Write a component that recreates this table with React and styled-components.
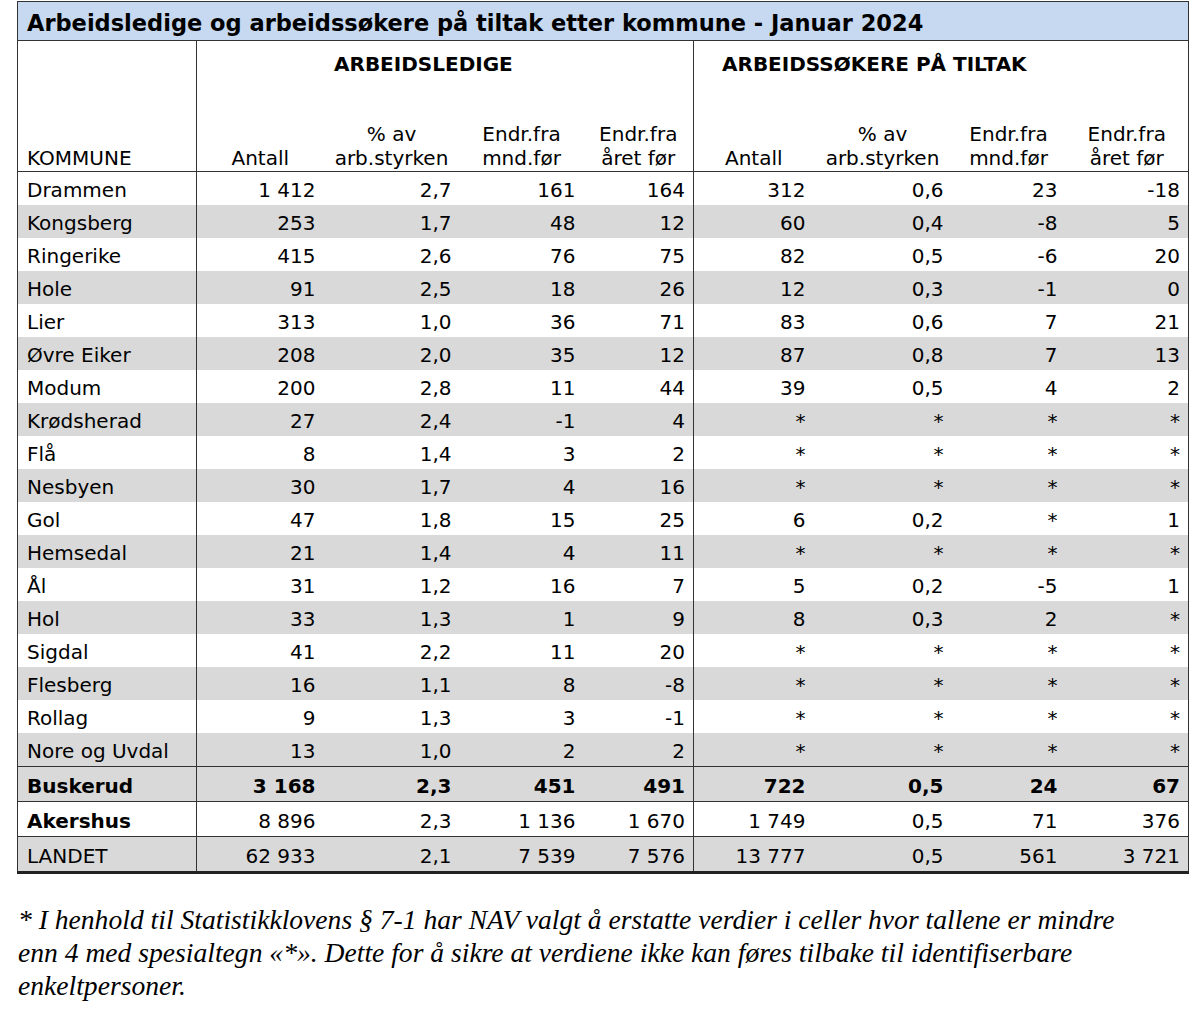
import React from "react";
import styled, { createGlobalStyle } from "styled-components";

const rows = [
  ["Drammen", "1 412", "2,7", "161", "164", "312", "0,6", "23", "-18"],
  ["Kongsberg", "253", "1,7", "48", "12", "60", "0,4", "-8", "5"],
  ["Ringerike", "415", "2,6", "76", "75", "82", "0,5", "-6", "20"],
  ["Hole", "91", "2,5", "18", "26", "12", "0,3", "-1", "0"],
  ["Lier", "313", "1,0", "36", "71", "83", "0,6", "7", "21"],
  ["Øvre Eiker", "208", "2,0", "35", "12", "87", "0,8", "7", "13"],
  ["Modum", "200", "2,8", "11", "44", "39", "0,5", "4", "2"],
  ["Krødsherad", "27", "2,4", "-1", "4", "*", "*", "*", "*"],
  ["Flå", "8", "1,4", "3", "2", "*", "*", "*", "*"],
  ["Nesbyen", "30", "1,7", "4", "16", "*", "*", "*", "*"],
  ["Gol", "47", "1,8", "15", "25", "6", "0,2", "*", "1"],
  ["Hemsedal", "21", "1,4", "4", "11", "*", "*", "*", "*"],
  ["Ål", "31", "1,2", "16", "7", "5", "0,2", "-5", "1"],
  ["Hol", "33", "1,3", "1", "9", "8", "0,3", "2", "*"],
  ["Sigdal", "41", "2,2", "11", "20", "*", "*", "*", "*"],
  ["Flesberg", "16", "1,1", "8", "-8", "*", "*", "*", "*"],
  ["Rollag", "9", "1,3", "3", "-1", "*", "*", "*", "*"],
  ["Nore og Uvdal", "13", "1,0", "2", "2", "*", "*", "*", "*"],
];

const colWidths = [179, 127, 136, 124, 110, 120, 138, 114, 123];

const subHeads = [
  ["Antall"],
  ["% av", "arb.styrken"],
  ["Endr.fra", "mnd.før"],
  ["Endr.fra", "året før"],
];

const GlobalStyle = createGlobalStyle`
  body {
    margin: 0;
    background: #fff;
    font-family: "DejaVu Sans", Verdana, sans-serif;
    color: #000;
  }
`;

const Page = styled.div`
  padding: 1px 0 0 17px;
`;

const Table = styled.table`
  border-collapse: collapse;
  table-layout: fixed;
  width: 1171px;
  font-size: 20px;
  line-height: 24px;
  border: 1.5px solid #333;
`;

const TitleCell = styled.th`
  background: #c6d9f0;
  text-align: left;
  font-size: 22.5px;
  font-weight: bold;
  height: 34px;
  line-height: 34px;
  padding: 4px 0 0 9px;
  border-bottom: 1.5px solid #333;
  white-space: nowrap;
`;

const GroupHead = styled.th`
  text-align: left;
  font-weight: bold;
  height: 35px;
  vertical-align: top;
  padding: 11px 0 0 ${({ $indent }) => $indent}px;
  border-left: ${({ $divider }) => ($divider ? "1.5px solid #333" : "none")};
`;

const NameHead = styled.th`
  text-align: left;
  font-weight: normal;
  vertical-align: bottom;
  padding: 0 0 1px 9px;
  border-right: 1.5px solid #333;
  border-bottom: 1.5px solid #333;
`;

const SubHead = styled.th`
  font-weight: normal;
  text-align: center;
  vertical-align: bottom;
  height: 83px;
  padding: 0 0 1px 0;
  border-left: ${({ $divider }) => ($divider ? "1.5px solid #333" : "none")};
  border-bottom: 1.5px solid #333;
  white-space: nowrap;
`;

const HeadLine = styled.span`
  display: block;
`;

const Row = styled.tr`
  background: ${({ $shade }) => ($shade ? "#d9d9d9" : "#fff")};
  border-top: ${({ $rule }) => ($rule ? "1.5px solid #333" : "none")};
  border-bottom: ${({ $last }) => ($last ? "3px solid #222" : "none")};
`;

const NameCell = styled.td`
  height: ${({ $tall }) => ($tall ? 31 : 30)}px;
  padding: 3px 0 0 9px;
  font-weight: ${({ $bold }) => ($bold ? "bold" : "normal")};
  border-right: 1.5px solid #333;
  white-space: nowrap;
`;

const NumCell = styled.td`
  text-align: right;
  padding: 3px 8px 0 0;
  font-weight: ${({ $bold }) => ($bold ? "bold" : "normal")};
  border-left: ${({ $divider }) => ($divider ? "1.5px solid #333" : "none")};
  white-space: nowrap;
`;

const Footnote = styled.p`
  margin: 29px 0 0 1px;
  font-family: "Liberation Serif", "Times New Roman", serif;
  font-style: italic;
  font-size: 27.6px;
  line-height: 33px;
`;

const DataRow = ({ cells, shade, bold, nameBold, rule, last, tall }) => (
  <Row $shade={shade} $rule={rule} $last={last}>
    <NameCell $bold={bold || nameBold} $tall={tall}>
      {cells[0]}
    </NameCell>
    {cells.slice(1).map((v, i) => (
      <NumCell key={i} $bold={bold} $divider={i === 4}>
        {v}
      </NumCell>
    ))}
  </Row>
);

export default function App() {
  const heads = [...subHeads, ...subHeads];
  return (
    <Page>
      <GlobalStyle />
      <Table>
        <colgroup>
          {colWidths.map((w, i) => (
            <col key={i} style={{ width: w }} />
          ))}
        </colgroup>
        <thead>
          <tr>
            <TitleCell colSpan={9}>
              Arbeidsledige og arbeidssøkere på tiltak etter kommune - Januar 2024
            </TitleCell>
          </tr>
          <tr>
            <NameHead rowSpan={2}>KOMMUNE</NameHead>
            <GroupHead colSpan={4} $indent={137}>
              ARBEIDSLEDIGE
            </GroupHead>
            <GroupHead colSpan={4} $indent={28} $divider>
              ARBEIDSSØKERE PÅ TILTAK
            </GroupHead>
          </tr>
          <tr>
            {heads.map((h, i) => (
              <SubHead key={i} $divider={i === 4}>
                {h.map((line, j) => (
                  <HeadLine key={j}>{line}</HeadLine>
                ))}
              </SubHead>
            ))}
          </tr>
        </thead>
        <tbody>
          {rows.map((r, i) => (
            <DataRow key={r[0]} cells={r} shade={i % 2 === 1} />
          ))}
          <DataRow
            cells={["Buskerud", "3 168", "2,3", "451", "491", "722", "0,5", "24", "67"]}
            shade
            bold
            rule
            tall
          />
          <DataRow
            cells={["Akershus", "8 896", "2,3", "1 136", "1 670", "1 749", "0,5", "71", "376"]}
            nameBold
            rule
            tall
          />
          <DataRow
            cells={["LANDET", "62 933", "2,1", "7 539", "7 576", "13 777", "0,5", "561", "3 721"]}
            shade
            rule
            last
            tall
          />
        </tbody>
      </Table>
      <Footnote>
        * I henhold til Statistikklovens § 7-1 har NAV valgt å erstatte verdier i celler hvor tallene er mindre
        <br />
        enn 4 med spesialtegn «*». Dette for å sikre at verdiene ikke kan føres tilbake til identifiserbare
        <br />
        enkeltpersoner.
      </Footnote>
    </Page>
  );
}
